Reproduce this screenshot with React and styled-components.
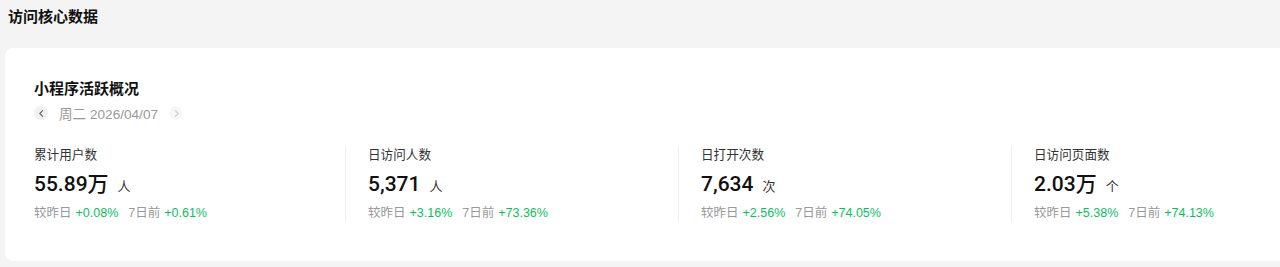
import React from 'react';
import styled, { createGlobalStyle } from 'styled-components';

const GlobalStyle = createGlobalStyle`
    body {
        margin: 0;
        background-color: #f4f4f4;
        font-family: 'Liberation Sans', 'Noto Sans CJK SC', sans-serif;
        overflow: hidden;
    }
`
const Page = styled.div`
    width: 1400px;
    padding: 5px 0 0 5px;
`
const PageTitle = styled.h1`
    margin: 0 0 19px 3px;
    font-size: 15px;
    line-height: 24px;
    font-weight: bold;
    color: #111;
`
const Card = styled.section`
    background-color: #fff;
    border-radius: 8px;
    padding: 30px 0 39px 29px;
`
const CardTitle = styled.h2`
    margin: 0;
    font-size: 15px;
    line-height: 22px;
    font-weight: bold;
    color: #111;
`
const DateRow = styled.div`
    display: flex;
    align-items: center;
    gap: 11px;
    margin-top: 2px;
    height: 22px;
    font-size: 13.6px;
    color: #999;
`
const ArrowButton = styled.span`
    width: 14px;
    height: 14px;
    border-radius: 50%;
    display: flex;
    align-items: center;
    justify-content: center;
    background-color: ${p => (p.disabled ? '#f7f7f7' : '#f0f0f0')};
    color: ${p => (p.disabled ? '#ccc' : '#666')};
`
const Stats = styled.div`
    display: flex;
    margin-top: 22px;
`
const Stat = styled.div`
    box-sizing: border-box;
    padding-left: ${p => (p.first ? '0' : '22px')};
    border-left: ${p => (p.first ? 'none' : '1px solid #eee')};
    width: ${p => (p.first ? '311px' : '333px')};
`
const Label = styled.div`
    font-size: 12.6px;
    line-height: 18px;
    color: #333;
`
const ValueRow = styled.div`
    display: flex;
    align-items: baseline;
    gap: 9px;
    margin-top: 6px;
    line-height: 28px;
`
const Value = styled.span`
    font-family: Roboto, 'Noto Sans CJK SC', sans-serif;
    font-weight: 500;
    font-size: 21px;
    color: #111;
`
const Unit = styled.span`
    font-size: 13px;
    color: #333;
`
const Compare = styled.div`
    display: flex;
    gap: 10px;
    margin-top: 3px;
    font-size: 12.5px;
    line-height: 18px;
    color: #999;
`
const Up = styled.span`
    color: #07c160;
    margin-left: 4px;
`

const Chevron = ({ dir }) => (
    <svg width="9" height="9" viewBox="0 0 8 8" fill="none">
        <path
            d={dir === 'left' ? 'M5 1.5 L2.5 4 L5 6.5' : 'M3 1.5 L5.5 4 L3 6.5'}
            stroke="currentColor"
            strokeWidth="1"
            strokeLinecap="round"
            strokeLinejoin="round"
        />
    </svg>
)

const stats = [
    { label: '累计用户数', value: '55.89万', unit: '人', day: '+0.08%', week: '+0.61%' },
    { label: '日访问人数', value: '5,371', unit: '人', day: '+3.16%', week: '+73.36%' },
    { label: '日打开次数', value: '7,634', unit: '次', day: '+2.56%', week: '+74.05%' },
    { label: '日访问页面数', value: '2.03万', unit: '个', day: '+5.38%', week: '+74.13%' },
]

const App = () => {
    return (
        <Page>
            <GlobalStyle />
            <PageTitle>访问核心数据</PageTitle>
            <Card>
                <CardTitle>小程序活跃概况</CardTitle>
                <DateRow>
                    <ArrowButton><Chevron dir="left" /></ArrowButton>
                    <span>周二 2026/04/07</span>
                    <ArrowButton disabled><Chevron dir="right" /></ArrowButton>
                </DateRow>
                <Stats>
                    {stats.map((s, i) => (
                        <Stat key={s.label} first={i === 0}>
                            <Label>{s.label}</Label>
                            <ValueRow>
                                <Value>{s.value}</Value>
                                <Unit>{s.unit}</Unit>
                            </ValueRow>
                            <Compare>
                                <span>较昨日<Up>{s.day}</Up></span>
                                <span>7日前<Up>{s.week}</Up></span>
                            </Compare>
                        </Stat>
                    ))}
                </Stats>
            </Card>
        </Page>
    );
}

export default App;
